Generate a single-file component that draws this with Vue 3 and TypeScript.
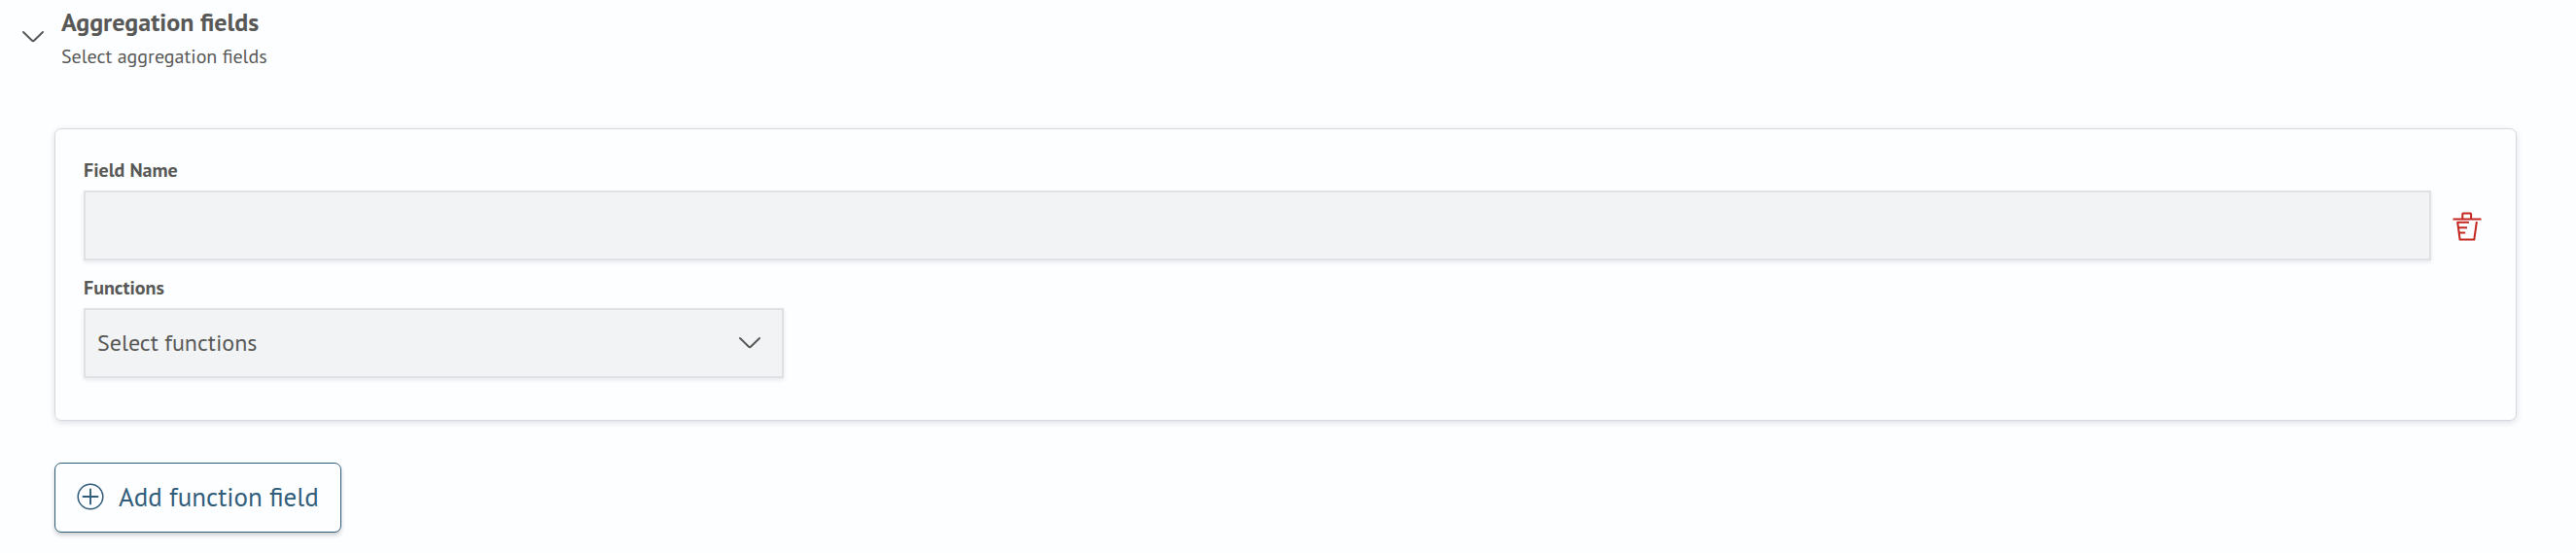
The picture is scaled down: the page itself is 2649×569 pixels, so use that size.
<script setup lang="ts">
import { ref } from 'vue'

const open = ref<boolean>(true)
const fieldName = ref<string>('')
const selected = ref<string>('')
</script>

<template>
  <main class="page">
    <header class="heading">
      <button class="icon-button toggle" type="button" aria-label="Toggle section" :aria-expanded="open" @click="open = !open">
        <svg width="24" height="14" viewBox="0 0 24 14" fill="none" stroke="currentColor" stroke-width="2" stroke-linecap="round" stroke-linejoin="round">
          <path d="M2 2 L11 10.7 Q12 11.6 13 10.7 L22 2" />
        </svg>
      </button>
      <div>
        <h2 class="title">Aggregation fields</h2>
        <p class="subtitle">Select aggregation fields</p>
      </div>
    </header>

    <section v-if="open" class="body">
      <div class="card">
        <label class="label" for="field-name">Field Name</label>
        <div class="row">
          <input id="field-name" v-model="fieldName" class="control" type="text" />
          <button class="icon-button remove" type="button" aria-label="Remove field">
            <svg width="30" height="30" viewBox="0 0 30 30" fill="none" stroke="currentColor" stroke-width="2">
              <path d="M.5 7.5H29.5" />
              <path d="M10.3 7V2.2Q10.3 1.5 11 1.5H18.4Q19.1 1.5 19.1 2.2V7" />
              <path d="M4.5 10.8H17M6 16.3H15M6.5 21.5H13.2" />
              <path d="M5.2 10.5L7.6 28.5H22.3L24.9 10" />
            </svg>
          </button>
        </div>
        <label class="label" for="functions">Functions</label>
        <div class="select-wrap">
          <select id="functions" v-model="selected" class="control select">
            <option value="">Select functions</option>
          </select>
          <svg class="caret" width="24" height="14" viewBox="0 0 24 14" fill="none" stroke="currentColor" stroke-width="2" stroke-linecap="round" stroke-linejoin="round">
            <path d="M2 2 L11 10.7 Q12 11.6 13 10.7 L22 2" />
          </svg>
        </div>
      </div>

      <button class="add" type="button">
        <svg width="28" height="28" viewBox="0 0 28 28" fill="none" stroke="currentColor" stroke-width="1.5">
          <circle cx="14" cy="14" r="12.8" />
          <path d="M14 6.5V21.5M6.5 14H21.5" stroke-width="1.9" stroke-linecap="round" />
        </svg>
        <span>Add function field</span>
      </button>
    </section>
  </main>
</template>

<style>
body {
  background: #fdfeff;
}
</style>

<style scoped>
.page {
  color: #585957;
  font-family: "PT Sans", Lato, "Noto Sans", sans-serif;
  font-size: 20px;
}
.heading {
  display: flex;
  align-items: center;
  gap: 17px;
  padding: 4px 22px;
}
.toggle {
  padding-bottom: 3px;
}
.title,
.subtitle {
  margin: 0;
}
.title {
  font-size: 26px;
  line-height: 38px;
  font-weight: 700;
}
.subtitle {
  line-height: 32px;
}
.icon-button {
  display: flex;
  padding-inline: 0;
  border: 0;
  background: none;
  color: inherit;
  cursor: pointer;
}
.body {
  padding: 54px 61px 20px 56px;
}
.card {
  padding: 26px 29px 43px;
  border: 1px solid #d5d8de;
  border-radius: 7px;
  box-shadow: 0 2px 6px rgba(30, 40, 70, 0.14);
}
.label {
  display: block;
  line-height: 32px;
  font-weight: 700;
}
.label + * {
  margin-top: 5px;
}
.row {
  display: flex;
  align-items: center;
  gap: 22px;
  margin-bottom: 12px;
}
.control {
  box-sizing: border-box;
  width: 100%;
  height: 72px;
  padding: 0 12px 2px;
  border: 2px solid #dfe1e5;
  border-radius: 0;
  background: #f2f3f5;
  box-shadow: 0 2px 4px rgba(30, 40, 70, 0.1);
  color: inherit;
  font-family: inherit;
  font-size: 24px;
}
.row .control {
  flex: 1;
  min-width: 0;
}
.remove {
  margin-right: 6px;
  padding-top: 3px;
  color: #c3271f;
}
.select-wrap {
  display: grid;
  align-items: center;
  max-width: 720px;
}
.select,
.caret {
  grid-area: 1 / 1;
}
.select {
  appearance: none;
}
.caret {
  justify-self: end;
  margin-right: 23px;
  pointer-events: none;
}
.add {
  display: flex;
  align-items: center;
  gap: 15px;
  height: 72px;
  margin-top: 43px;
  padding: 0 22px 2px;
  border: 1px solid #2f5c7a;
  border-radius: 7px;
  background: #fdfeff;
  box-shadow: 0 3px 4px rgba(0, 0, 0, 0.18);
  color: #315d7b;
  font-family: inherit;
  font-size: 27px;
  cursor: pointer;
}
</style>
